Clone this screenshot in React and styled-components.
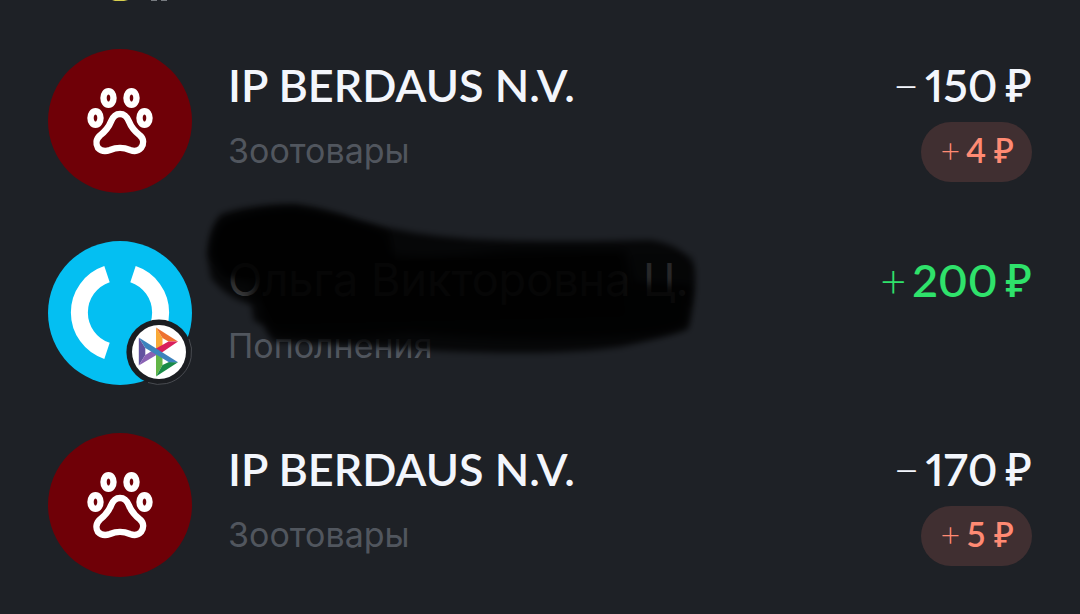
import React from "react";
import styled, { createGlobalStyle } from "styled-components";

const GlobalStyle = createGlobalStyle`
  * { box-sizing: border-box; }
  body {
    margin: 0;
    background: #1e2126;
    color: #f3f6fc;
    font-family: Lato, "Noto Sans", sans-serif;
  }
`;

const Page = styled.main`
  min-height: 100vh;
  overflow: hidden;
`;

const PreviousEdge = styled.div`
  height: 1px;
  margin-bottom: 24px;
  padding-left: 108px;
  overflow: hidden;

  svg { display: block; }
`;

const List = styled.ul`
  list-style: none;
  margin: 0;
  padding: 0 48px;
`;

const Row = styled.li`
  display: flex;
  align-items: flex-start;
  gap: 36px;
  padding: 24px 0;
`;

const Avatar = styled.div`
  position: relative;
  flex: none;
  width: 144px;
  height: 144px;
  border-radius: 50%;
  background: ${(p) => p.$color};

  > svg { display: block; }
`;

const BankBadge = styled.div`
  position: absolute;
  right: 0;
  bottom: 0;
  width: 66px;
  height: 66px;

  svg { display: block; }
`;

const Details = styled.div`
  position: relative;
  flex: 1;
  min-width: 0;
  padding-top: ${(p) => (p.$single ? 9 : 6)}px;
`;

const Title = styled.h2`
  margin: 0;
  font-size: 45px;
  line-height: 60px;
  white-space: nowrap;
  font-family: ${(p) => (p.$cyrillic ? "Inter, sans-serif" : "Lato, sans-serif")};
  font-weight: ${(p) => (p.$cyrillic ? 400 : 600)};
`;

const Category = styled.p`
  margin: 12px 0 0;
  font-family: Inter, sans-serif;
  font-size: 34px;
  line-height: 48px;
  font-weight: 400;
  color: #51565e;
`;

const Sum = styled.div`
  display: flex;
  flex: none;
  flex-direction: column;
  align-items: flex-end;
  padding-top: ${(p) => (p.$single ? 9 : 6)}px;
`;

const Amount = styled.span`
  font-size: 45px;
  line-height: 60px;
  font-weight: 600;
  white-space: nowrap;
  font-feature-settings: "pnum";
  color: ${(p) => (p.$income ? "#2fe26b" : "#f3f6fc")};
`;

const Sign = styled.span`
  margin-right: 6px;
  font-weight: 300;
`;

const Currency = styled.span`
  margin-left: 8px;
  font-family: "Noto Sans", sans-serif;
  font-weight: 500;
  line-height: 1;
`;

const Cashback = styled.span`
  margin-top: 7px;
  padding: 0 18px 4px 20px;
  border-radius: 30px;
  background: #402f31;
  color: #ff8a73;
  font-size: 34px;
  line-height: 56px;
  font-weight: 600;
  white-space: nowrap;
`;

const Scribble = styled.svg`
  position: absolute;
  left: -28px;
  top: -46px;
`;

function Paw() {
  return (
    <svg width="144" height="144" viewBox="0 0 144 144" fill="none" stroke="#fff" strokeWidth="6.4" aria-hidden="true">
      <ellipse cx="60.5" cy="49" rx="5" ry="6.8" />
      <ellipse cx="83.5" cy="49" rx="5" ry="6.8" />
      <ellipse cx="47.5" cy="69" rx="5" ry="6.8" />
      <ellipse cx="96.5" cy="69" rx="5" ry="6.8" />
      <path d="M72 65C76.500 65 79 67.500 81 72.500C83.500 79 87 82.500 92 86.500C96 90 96 95 93 99C90 102.500 86 102.500 82 101C75 98 69 98 62 101C58 102.500 53.500 102.500 50 99C47.500 95 48 90 52 86.500C57 82.500 60.500 79 63 72.500C65 67.500 67.500 65 72 65Z" />
    </svg>
  );
}

function Ring() {
  return (
    <svg width="144" height="144" viewBox="0 0 144 144" fill="none" stroke="#fff" strokeWidth="17" aria-hidden="true">
      <path d="M59 33.100A40.500 40.500 0 0 0 59 109.900" />
      <path d="M85 33.100A40.500 40.500 0 0 1 85 109.900" />
    </svg>
  );
}

function FastPayments() {
  return (
    <svg width="66" height="66" viewBox="0 0 66 66" aria-hidden="true">
      <circle cx="33" cy="33" r="32.600" fill="#1b1d21" />
      <path d="M63 20A32.600 32.600 0 0 1 22 63.500" fill="none" stroke="#5d6065" strokeWidth="0.700" />
      <circle cx="33" cy="33" r="27" fill="#fff" />
      <path d="M12.800 18.400L19.300 29V36L12.800 46.600Z" fill="#62529f" />
      <path d="M12.800 46.600L19.300 36L29 30L34.500 33.500Z" fill="#8b62b4" />
      <path d="M30 8.500L36.500 19V30L30 33.500Z" fill="#f9a936" />
      <path d="M30 8.500L52 22.600L42.500 22.400L36.500 19Z" fill="#ee7130" />
      <path d="M52 22.600L42.500 22.400L30 29.500V37.500Z" fill="#d91f5c" />
      <path d="M30 33L36.500 36.500V46L30 57.400Z" fill="#62b646" />
      <path d="M30 57.400L36.500 46L43 43L52 43.200Z" fill="#198b48" />
      <path d="M12.800 18.400L52 43.200H43L19.300 29Z" fill="#3d83bd" />
    </svg>
  );
}

function NameCover() {
  return (
    <Scribble width="504" height="170" viewBox="0 0 504 170" aria-hidden="true">
      <defs>
        <filter id="soft" x="-10%" y="-10%" width="120%" height="120%">
          <feGaussianBlur stdDeviation="3" />
        </filter>
        <filter id="softer" x="-10%" y="-10%" width="120%" height="120%">
          <feGaussianBlur stdDeviation="4" />
        </filter>
      </defs>
      <path
        filter="url(#soft)"
        fillOpacity="0.800"
        d="M7 60Q9 31 21 19Q50 9 95 9Q125 13 160 26Q210 40 270 44Q340 48 450 45Q480 49 493 68Q499 85 488 134Q470 141 420 152Q360 161 240 156Q160 150 74 147Q66 138 64 130L54 126L51 109Q28 104 11 83Z"
      />
      <path
        filter="url(#softer)"
        fillOpacity="0.780"
        d="M12 60Q13 34 26 25Q60 14 95 14Q140 20 186 38L192 60Q240 64 300 56Q380 54 426 56L434 88L491 90L486 130Q465 140 420 142Q330 148 210 138Q140 146 76 140L62 124L60 106L48 104L56 90L24 82Z"
      />
      <path
        filter="url(#soft)"
        fillOpacity="0.450"
        d="M12 60Q13 34 26 25Q60 14 95 14Q140 20 190 38L194 66L420 60L426 122L74 130L62 104L58 84L24 80Z"
      />
      <path filter="url(#soft)" fillOpacity="0.200" d="M430 60H494L490 112H430Z" />
    </Scribble>
  );
}

function Payment({ title, category, sign, amount, cashback, income, icon, badge, color, covered }) {
  const single = !cashback;
  return (
    <Row>
      <Avatar $color={color}>
        {icon}
        {badge && <BankBadge>{badge}</BankBadge>}
      </Avatar>
      <Details $single={single}>
        <Title $cyrillic={covered}>{title}</Title>
        <Category>{category}</Category>
        {covered && <NameCover />}
      </Details>
      <Sum $single={single}>
        <Amount $income={income}>
          <Sign>{sign}</Sign>{amount}<Currency>₽</Currency>
        </Amount>
        {cashback && (
          <Cashback>
            <Sign>+</Sign>{cashback}<Currency>₽</Currency>
          </Cashback>
        )}
      </Sum>
    </Row>
  );
}

export default function App() {
  return (
    <Page>
      <GlobalStyle />
      <PreviousEdge>
        <svg width="64" height="1" viewBox="0 0 64 1" aria-hidden="true">
          <path d="M4 0H20L16 1H7Z" fill="#d9d04e" />
          <path d="M43 0H49V1H43ZM53 0H59V1H53Z" fill="#777b80" />
        </svg>
      </PreviousEdge>
      <List>
        <Payment title="IP BERDAUS N.V." category="Зоотовары" sign="−" amount="150" cashback="4" color="#6f0007" icon={<Paw />} />
        <Payment title="Ольга Викторовна Ц." category="Пополнения" sign="+" amount="200" income covered color="#04bff2" icon={<Ring />} badge={<FastPayments />} />
        <Payment title="IP BERDAUS N.V." category="Зоотовары" sign="−" amount="170" cashback="5" color="#6f0007" icon={<Paw />} />
      </List>
    </Page>
  );
}
